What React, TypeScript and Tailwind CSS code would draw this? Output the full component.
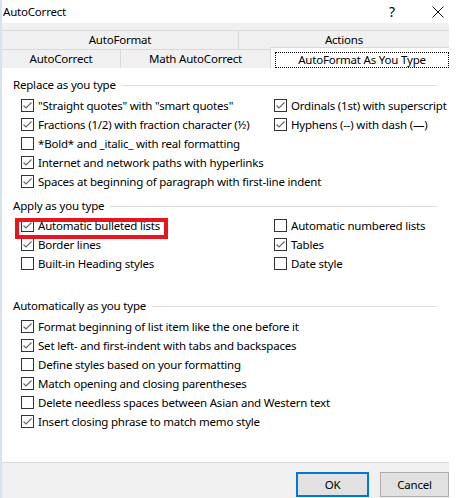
import React from "react";

const font = { fontFamily: '"Noto Sans", "Liberation Sans", sans-serif' };

function Box({ checked }: { checked: boolean }) {
  return (
    <svg width="13" height="13" viewBox="0 0 13 13" className="shrink-0">
      <rect x="0.5" y="0.5" width="12" height="12" fill="#fff" stroke="#333" strokeWidth="1" />
      {checked && (
        <polyline points="2.5,6.5 5,9 10.5,3.5" fill="none" stroke="#666" strokeWidth="1.1" />
      )}
    </svg>
  );
}

function Item({ label, checked }: { label: string; checked: boolean }) {
  return (
    <div className="flex h-[19px] items-center gap-[4px]">
      <Box checked={checked} />
      <span className="whitespace-nowrap text-[11.5px] leading-none tracking-[-0.2px] text-black">{label}</span>
    </div>
  );
}

function Header({ label, className }: { label: string; className?: string }) {
  return (
    <div className={`flex h-[18px] items-center pl-[11px] pr-[12px] ${className ?? ""}`}>
      <span className="whitespace-nowrap text-[11.5px] leading-none tracking-[-0.2px] text-black">{label}</span>
      <div className="ml-[6px] h-px flex-1 bg-[#dcdcdc]" />
    </div>
  );
}

export default function App() {
  return (
    <div style={font} className="flex h-[498px] w-[458px] bg-white">
      <div className="w-[2px] shrink-0 bg-[#d8e1ef]" />
      <div className="flex w-[447px] flex-col">
        {/* title bar */}
        <div className="flex h-[23px] items-center bg-white pl-[1px]">
          <span className="text-[11.5px] leading-none tracking-[-0.2px] text-black">AutoCorrect</span>
          <span className="ml-auto text-[14px] leading-none text-black">?</span>
          <svg width="12" height="12" viewBox="0 0 12 12" className="ml-[37px] mr-[5px]">
            <path d="M0.5 0.5 L11.5 11.5 M11.5 0.5 L0.5 11.5" stroke="#111" strokeWidth="1" />
          </svg>
        </div>
        {/* tabs */}
        <div className="h-[45px] bg-[#f0f0f0] pt-[7px]">
          <div className="flex h-[19px] border-t border-[#d9d9d9] text-[11.5px] leading-none tracking-[-0.2px] text-black">
            <div className="flex w-[237px] items-center justify-center border-r border-[#d9d9d9]">AutoFormat</div>
            <div className="flex flex-1 items-center justify-center">Actions</div>
          </div>
          <div className="flex h-[19px] border-t border-[#d9d9d9] text-[11.5px] leading-none tracking-[-0.2px] text-black">
            <div className="flex w-[119px] items-center justify-center border-r border-[#d9d9d9]">AutoCorrect</div>
            <div className="flex w-[149px] items-center justify-center">Math AutoCorrect</div>
            <div className="relative flex-1">
              <div className="absolute inset-x-0 top-[-3px] bottom-[-1px] border-l border-t border-[#d9d9d9] bg-white pl-[4px] pt-[4px]">
                <div className="flex h-[16px] items-center justify-center border border-dotted border-black">
                  AutoFormat As You Type
                </div>
              </div>
            </div>
          </div>
        </div>
        {/* content */}
        <div className="flex-1 bg-white pt-[8px]">
          <Header label="Replace as you type" />
          <div className="mt-[2px] flex pl-[19px]">
            <div className="w-[253px]">
              <Item label={'"Straight quotes" with "smart quotes"'} checked />
              <Item label="Fractions (1/2) with fraction character (½)" checked />
              <Item label="*Bold* and _italic_ with real formatting" checked={false} />
              <Item label="Internet and network paths with hyperlinks" checked />
              <Item label="Spaces at beginning of paragraph with first-line indent" checked />
            </div>
            <div>
              <Item label="Ordinals (1st) with superscript" checked />
              <Item label="Hyphens (--) with dash (—)" checked />
            </div>
          </div>
          <Header label="Apply as you type" className="mt-[6px]" />
          <div className="mt-[1px] flex pl-[19px]">
            <div className="w-[253px]">
              <div className="relative">
                <Item label="Automatic bulleted lists" checked />
                <div className="absolute left-[-6px] top-[2px] h-[21px] w-[153px] border-4 border-[#e8141e]" />
              </div>
              <Item label="Border lines" checked />
              <Item label="Built-in Heading styles" checked={false} />
            </div>
            <div>
              <Item label="Automatic numbered lists" checked={false} />
              <Item label="Tables" checked />
              <Item label="Date style" checked={false} />
            </div>
          </div>
          <Header label="Automatically as you type" className="mt-[24px]" />
          <div className="mt-[2px] pl-[19px]">
            <Item label="Format beginning of list item like the one before it" checked />
            <Item label="Set left- and first-indent with tabs and backspaces" checked />
            <Item label="Define styles based on your formatting" checked={false} />
            <Item label="Match opening and closing parentheses" checked />
            <Item label="Delete needless spaces between Asian and Western text" checked={false} />
            <Item label="Insert closing phrase to match memo style" checked />
          </div>
        </div>
        {/* footer */}
        <div className="flex h-[36px] items-start justify-end gap-[11px] border-t border-[#d9d9d9] bg-[#f0f0f0] pt-[9px]">
          <button className="flex h-[25px] w-[73px] items-center justify-center border-2 border-[#0078d7] bg-[#e1e1e1] text-[11.5px] leading-none tracking-[-0.2px] text-black">
            OK
          </button>
          <button className="flex h-[25px] w-[69px] items-center justify-center border border-[#adadad] bg-[#e1e1e1] text-[11.5px] leading-none tracking-[-0.2px] text-black">
            Cancel
          </button>
        </div>
      </div>
    </div>
  );
}
